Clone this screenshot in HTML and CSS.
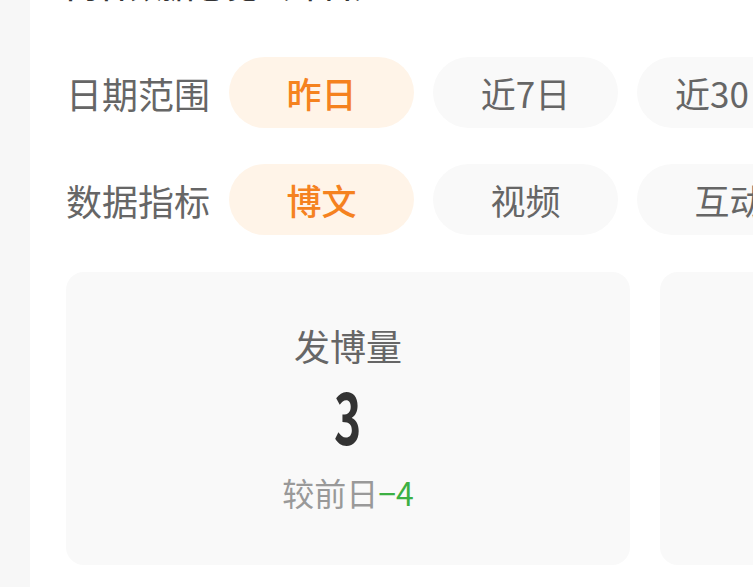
FILE: index.html
```html
<!DOCTYPE html>
<html lang="zh-CN">
<head>
  <meta charset="UTF-8">
  <meta name="viewport" content="width=device-width, initial-scale=1.0">
  <title>数据概况</title>
  <link rel="stylesheet" href="styles.css">
</head>
<body>
  <div class="side"></div>
  <main class="panel">
    <h2 class="title">内容数据总览（昨日）</h2>

    <div class="filter">
      <span class="filter-label">日期范围</span>
      <span class="pill active">昨日</span>
      <span class="pill">近7日</span>
      <span class="pill">近30日</span>
    </div>

    <div class="filter">
      <span class="filter-label">数据指标</span>
      <span class="pill active">博文</span>
      <span class="pill">视频</span>
      <span class="pill">互动</span>
    </div>

    <div class="cards">
      <div class="card">
        <div class="card-name">发博量</div>
        <div class="card-value"><span class="num">3</span></div>
        <div class="card-diff">较前日<span class="down">−4</span></div>
      </div>
      <div class="card"></div>
    </div>
  </main>
</body>
</html>
```

FILE: styles.css
```css
/* Reset */
* {
  margin: 0;
  padding: 0;
  box-sizing: border-box;
  font-family: "Noto Sans CJK SC", "Noto Sans", sans-serif;
}

body {
  width: 753px;
  height: 587px;
  overflow: hidden;
  display: flex;
  background: #fff;
}

.side {
  flex: 0 0 30px;
  background: #f7f7f7;
}

.panel {
  flex: 1;
  min-width: 0;
  background: #fff;
  padding: 0 0 0 36px;
  overflow: hidden;
}

.title {
  margin-top: -40px;
  height: 48px;
  font-size: 32px;
  line-height: 48px;
  font-weight: 500;
  color: #333;
  white-space: nowrap;
}

.filter {
  display: flex;
  align-items: center;
  gap: 19px;
  margin-top: 49px;
  white-space: nowrap;
}

.filter + .filter {
  margin-top: 36px;
}

.filter-label {
  font-size: 36px;
  color: #666;
  flex: 0 0 143px;
}

.pill {
  flex: 0 0 185px;
  height: 71px;
  line-height: 71px;
  border-radius: 36px;
  background: #f9f9f9;
  color: #666;
  font-size: 35px;
  text-align: center;
}

.pill.active {
  background: #fff4e8;
  color: #f5821f;
  font-weight: 500;
}

.cards {
  display: flex;
  gap: 30px;
  margin-top: 37px;
}

.card {
  flex: 0 0 564px;
  height: 293px;
  border-radius: 18px;
  background: #f9f9f9;
  text-align: center;
  padding-top: 49px;
}

.card-name {
  font-size: 36px;
  line-height: 48px;
  color: #666;
}

.card-value {
  font-family: "DejaVu Sans", sans-serif;
  font-weight: bold;
  font-size: 70px;
  line-height: 92px;
  color: #333;
}

/* condensed digits */
.card-value .num {
  display: inline-block;
  transform: scaleX(0.66);
}

.card-diff {
  font-size: 32px;
  line-height: 50px;
  color: #999;
}

.card-diff .down {
  color: #3cb043;
}
```
